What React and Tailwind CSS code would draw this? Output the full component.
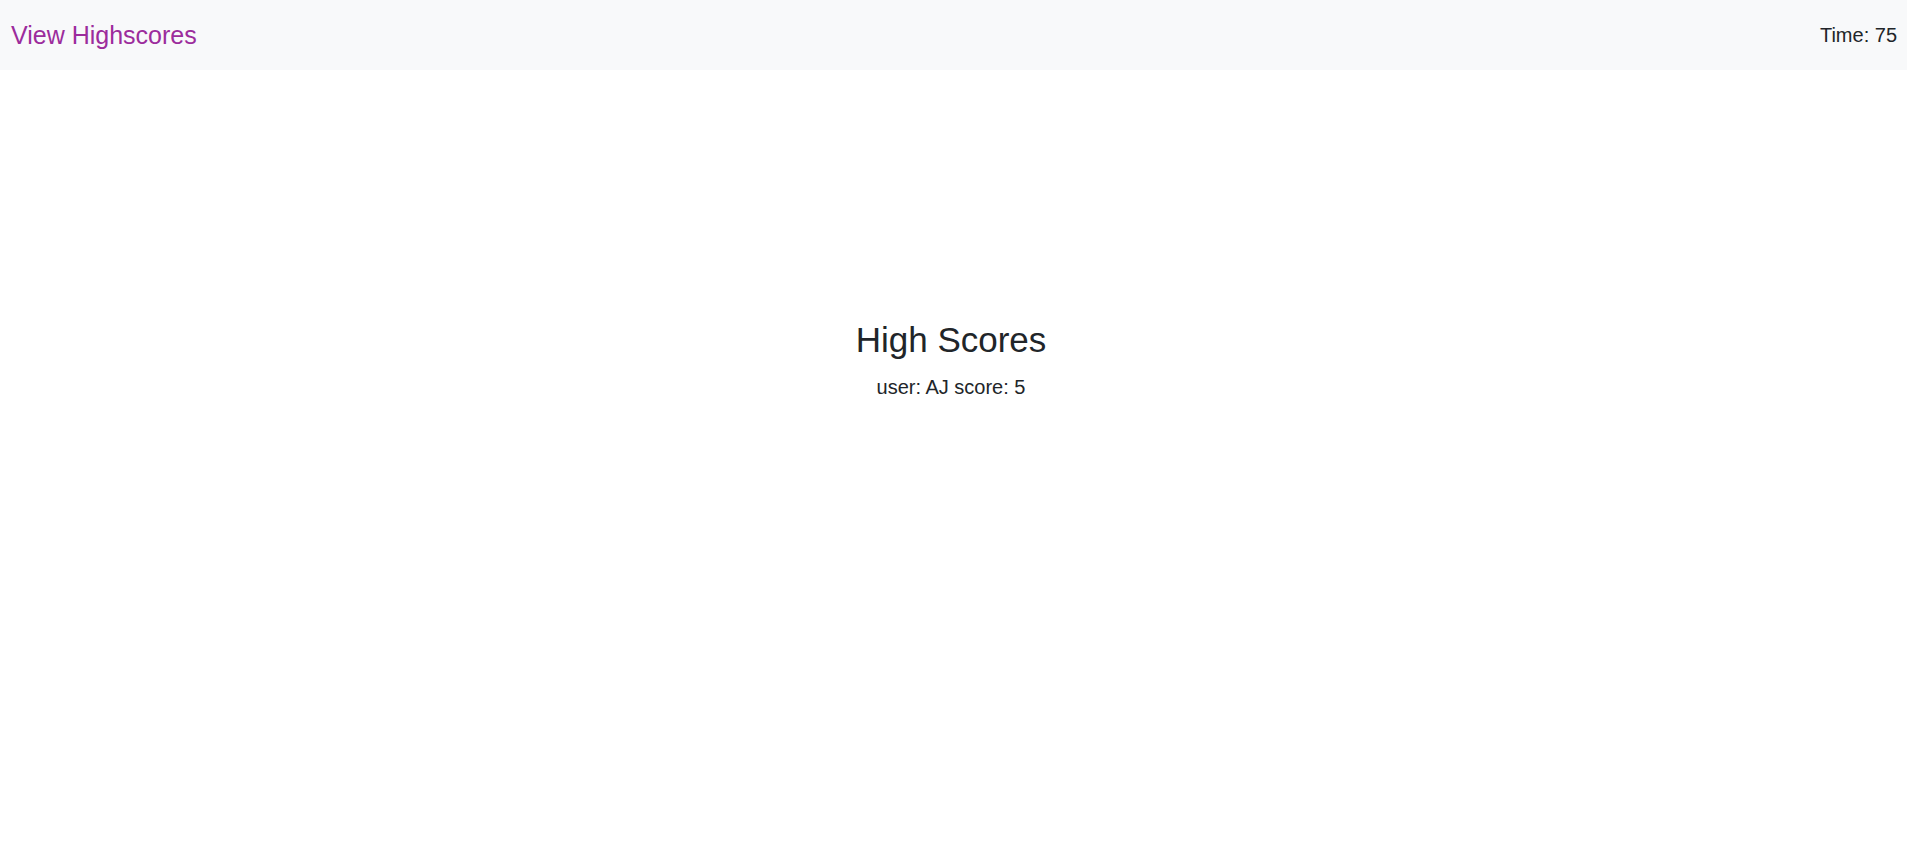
export default function App() {
  return (
    <div className="min-h-screen bg-white text-[#212529]" style={{ fontFamily: '"Liberation Sans", Arial, sans-serif' }}>
      <nav className="h-[70px] bg-[#f8f9fa] flex items-center justify-between pl-[11px] pr-[10px]">
        <a href="#" className="text-[25px] text-[#9c2c9c] leading-none">View Highscores</a>
        <span className="text-[20px] leading-none">Time: 75</span>
      </nav>
      <main className="flex flex-col items-center pt-[249px] pr-[5px]">
        <h1 className="text-[35px] leading-[42px] mb-[11px]">High Scores</h1>
        <p className="text-[20px] leading-[30px]">user: AJ score: 5</p>
      </main>
    </div>
  );
}
